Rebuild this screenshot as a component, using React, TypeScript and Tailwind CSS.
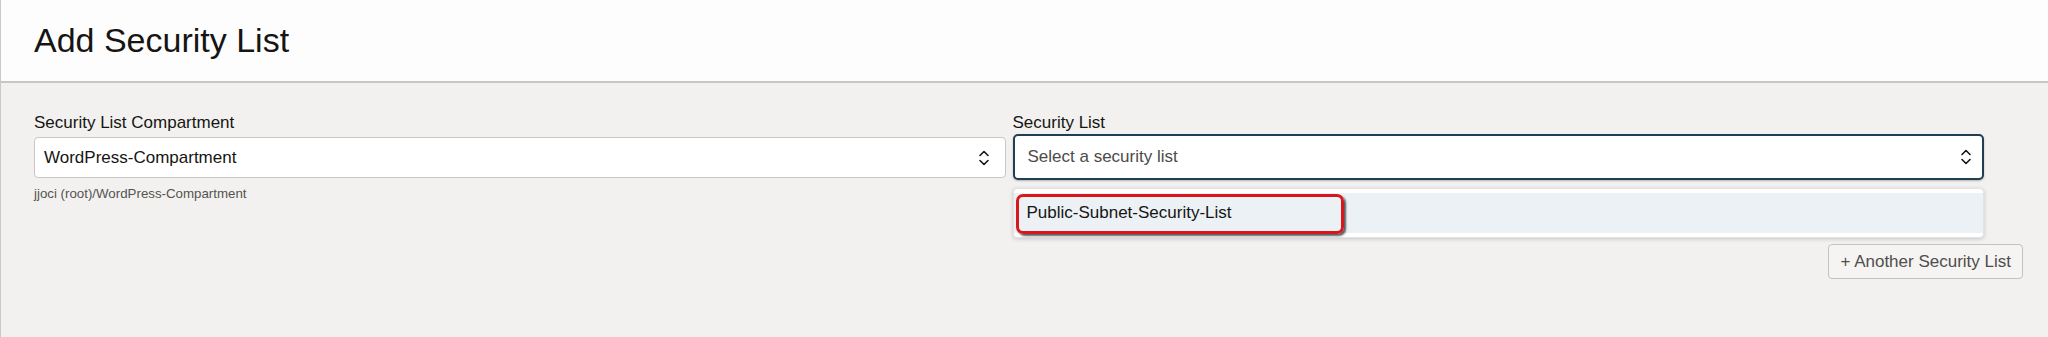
import React from "react";

const font = { fontFamily: '"Liberation Sans", Arial, Helvetica, sans-serif' };

function UpDownIcon({ color = "#161513" }: { color?: string }) {
    return (
        <svg width="12" height="18" viewBox="0 0 12 18" fill="none" stroke={color} strokeWidth="1.6" strokeLinecap="round" strokeLinejoin="round">
            <path d="M2 6.5 L6 2.5 L10 6.5" />
            <path d="M2 11.5 L6 15.5 L10 11.5" />
        </svg>
    );
}

export default function App() {
    return (
        <div className="h-[337px] w-full overflow-hidden bg-[#f2f1ef] border-l border-[#c9c9c9] text-[#161513]" style={font}>
            <header className="h-[83px] bg-[#fdfdfd] border-b-2 border-[#c7c6c4] flex items-center pl-[33px]">
                <h1 className="text-[34px] leading-none font-normal mt-[-2px]">Add Security List</h1>
            </header>

            <section className="pt-[30px] pl-[33px] pr-[64px]">
                <div className="flex gap-[7px]">
                    <div className="flex-1 flex flex-col">
                        <label className="text-[17px] leading-[20px] mb-[4px]">Security List Compartment</label>
                        <div className="h-[41px] bg-white border border-[#c8c7c5] rounded-[4px] flex items-center justify-between pl-[9px] pr-[15px]">
                            <span className="text-[17px]">WordPress-Compartment</span>
                            <UpDownIcon />
                        </div>
                        <p className="text-[13.3px] leading-[16px] mt-[8px] text-[#55534f]">jjoci (root)/WordPress-Compartment</p>
                    </div>

                    <div className="flex-1 flex flex-col relative">
                        <label className="text-[17px] leading-[20px] mb-[1px]">Security List</label>
                        <div className="h-[46px] bg-white border-2 border-[#1e4052] rounded-[5px] flex items-center justify-between pl-[13px] pr-[10px] shadow-[0_1px_2px_rgba(0,0,0,0.25)]">
                            <span className="text-[17px] text-[#4c4b49]">Select a security list</span>
                            <UpDownIcon />
                        </div>

                        {/* open listbox */}
                        <div className="absolute left-0 right-0 top-[75px] bg-white rounded-[4px] shadow-[0_1px_4px_rgba(0,0,0,0.18)] border border-[#e4e3e1] py-[4px] z-10">
                            <div className="h-[40px] bg-[#ecf1f5] flex items-center pl-[13px] relative">
                                <span className="text-[17px] text-[#161513]">Public-Subnet-Security-List</span>
                                <div className="absolute left-[2px] top-[1px] w-[328px] h-[40px] border-[3px] border-[#d9161c] rounded-[7px] shadow-[2px_2px_2px_rgba(40,40,40,0.75)]" />
                            </div>
                        </div>
                    </div>
                </div>

                <div className="flex justify-end mt-[42px] mr-[-39px]">
                    <button className="h-[35px] px-[11px] bg-[#f5f4f2] border border-[#c3c2c0] rounded-[4px] text-[17px] text-[#4f4e4c]">
                        + Another Security List
                    </button>
                </div>
            </section>
        </div>
    );
}
